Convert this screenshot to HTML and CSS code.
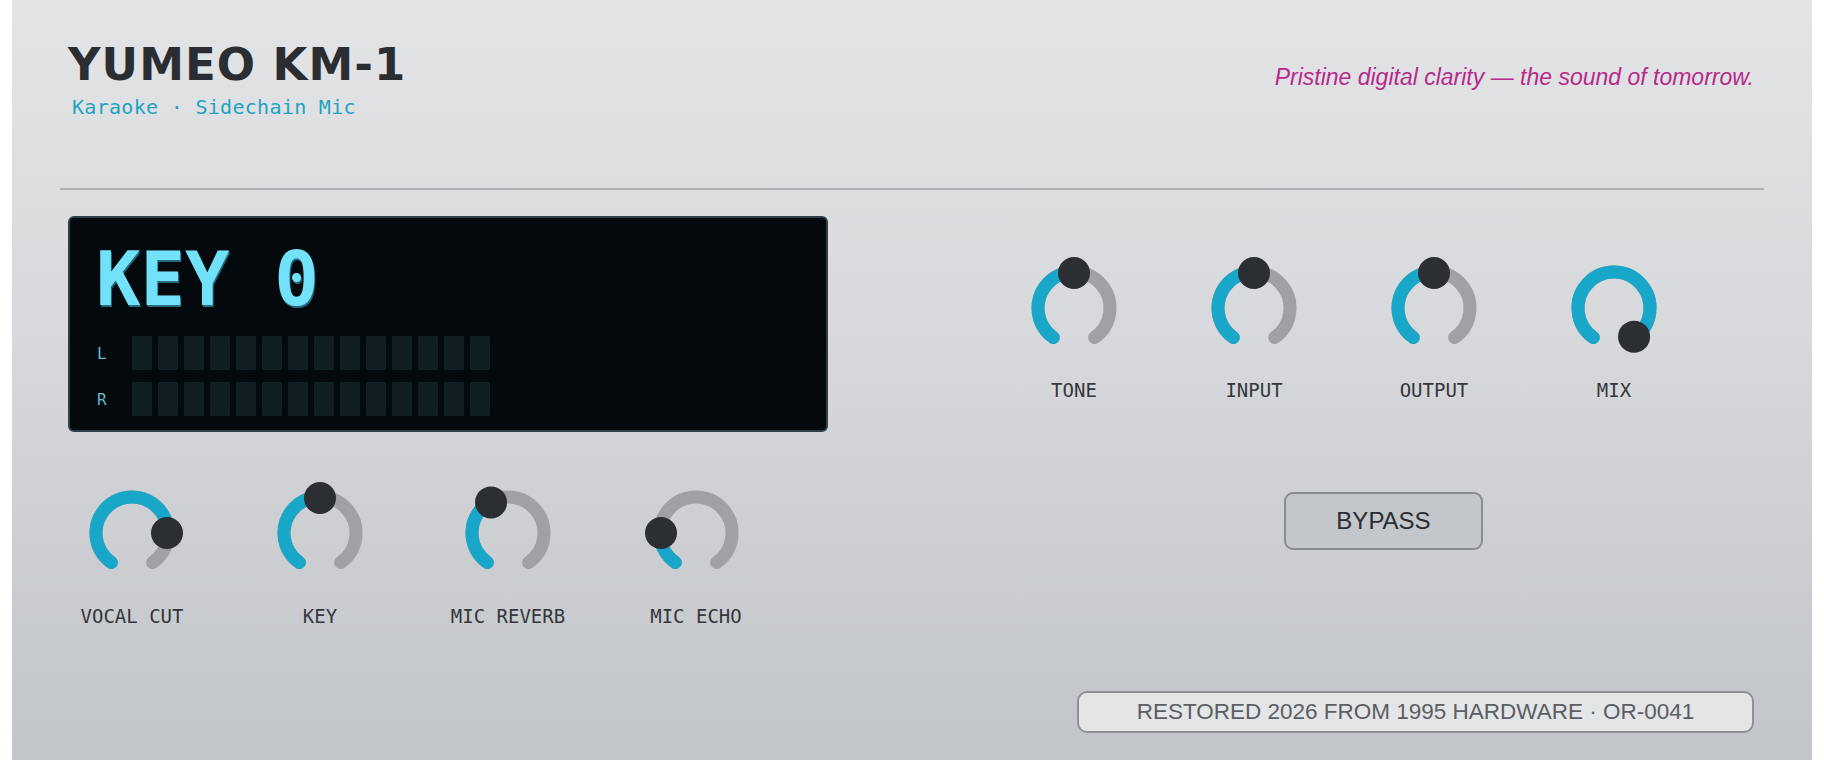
FILE: index.html
```html
<!DOCTYPE html>
<html lang="en">
<head>
  <meta charset="UTF-8">
  <title>YUMEO KM-1</title>
  <meta name="viewport" content="width=device-width, initial-scale=1.0">
  <link rel="stylesheet" href="styles.css">
</head>
<body>

<div class="panel">
  <header class="header">
    <div class="brand">
      <h1 class="title">YUMEO KM-1</h1>
      <div class="subtitle">Karaoke · Sidechain Mic</div>
    </div>
    <div class="tagline">Pristine digital clarity — the sound of tomorrow.</div>
  </header>

  <hr class="divider">

  <div class="main">
    <div class="left">
      <div class="display">
        <div class="readout">KEY 0</div>
        <div class="meter">
          <span class="ch">L</span>
          <div class="segs" data-count="14"></div>
        </div>
        <div class="meter">
          <span class="ch">R</span>
          <div class="segs" data-count="14"></div>
        </div>
      </div>

      <div class="knobs knobs-bottom">
        <div class="knob" data-value="0.81"><svg class="dial" viewBox="0 0 104 104"></svg><span class="knob-label">VOCAL CUT</span></div>
        <div class="knob" data-value="0.5"><svg class="dial" viewBox="0 0 104 104"></svg><span class="knob-label">KEY</span></div>
        <div class="knob" data-value="0.4"><svg class="dial" viewBox="0 0 104 104"></svg><span class="knob-label">MIC REVERB</span></div>
        <div class="knob" data-value="0.19"><svg class="dial" viewBox="0 0 104 104"></svg><span class="knob-label">MIC ECHO</span></div>
      </div>
    </div>

    <div class="right">
      <div class="knobs knobs-top">
        <div class="knob" data-value="0.5"><svg class="dial" viewBox="0 0 104 104"></svg><span class="knob-label">TONE</span></div>
        <div class="knob" data-value="0.5"><svg class="dial" viewBox="0 0 104 104"></svg><span class="knob-label">INPUT</span></div>
        <div class="knob" data-value="0.5"><svg class="dial" viewBox="0 0 104 104"></svg><span class="knob-label">OUTPUT</span></div>
        <div class="knob" data-value="1"><svg class="dial" viewBox="0 0 104 104"></svg><span class="knob-label">MIX</span></div>
      </div>
      <button class="bypass" type="button">BYPASS</button>
    </div>
  </div>

  <footer class="footer">
    <div class="badge">RESTORED 2026 FROM 1995 HARDWARE · OR-0041</div>
  </footer>
</div>

<script>
  // meter segments
  document.querySelectorAll('.segs').forEach(row => {
    const n = parseInt(row.dataset.count, 10);
    for (let i = 0; i < n; i++) {
      row.insertAdjacentHTML('beforeend', '<span class="seg"></span>');
    }
  });

  // knobs: 290 degree sweep, from -145 to +145 (0 = straight up)
  const START = -145;
  const END = 145;
  const C = 52;

  function polar(deg, r) {
    const a = deg * Math.PI / 180;
    return [C + r * Math.sin(a), C - r * Math.cos(a)];
  }

  function arc(from, to, r) {
    const [x1, y1] = polar(from, r);
    const [x2, y2] = polar(to, r);
    const large = (to - from) > 180 ? 1 : 0;
    return `M${x1.toFixed(2)} ${y1.toFixed(2)} A${r} ${r} 0 ${large} 1 ${x2.toFixed(2)} ${y2.toFixed(2)}`;
  }

  document.querySelectorAll('.knob').forEach(knob => {
    const v = parseFloat(knob.dataset.value);
    const ang = START + (END - START) * v;
    const [dx, dy] = polar(ang, 35);
    const svg = knob.querySelector('.dial');
    svg.innerHTML = `
      <path class="track" d="${arc(START, END, 36)}" />
      ${v > 0 ? `<path class="fill" d="${arc(START, ang, 36)}" />` : ''}
      <circle class="dot" cx="${dx.toFixed(2)}" cy="${dy.toFixed(2)}" r="16" />
    `;
  });
</script>

</body>
</html>
```

FILE: styles.css
```css
html, body {
  margin: 0;
  padding: 0;
  background: #fff;
}

.panel {
  margin-left: 12px;
  width: 1800px;
  min-height: 100vh;
  box-sizing: border-box;
  padding: 42px 48px 40px;
  background: linear-gradient(to bottom, #e3e4e6 0%, #d6d8db 45%, #c1c4c8 100%);
}

/* header */
.header {
  display: flex;
  justify-content: space-between;
  align-items: flex-start;
  padding: 0 10px 0 8px;
}

.title {
  margin: 0;
  font-family: "DejaVu Sans", sans-serif;
  font-weight: bold;
  font-size: 45px;
  line-height: 1;
  letter-spacing: 1px;
  color: #2a2d31;
}

.subtitle {
  margin-top: 8px;
  font-family: "DejaVu Sans Mono", monospace;
  font-size: 20px;
  line-height: 24px;
  letter-spacing: 0.3px;
  color: #1fa3c3;
  padding-left: 4px;
}

.tagline {
  margin-top: 22px;
  font-family: "Liberation Sans", sans-serif;
  font-style: italic;
  font-size: 23px;
  line-height: 26px;
  color: #b72a8b;
}

.divider {
  margin: 69px 0 0;
  border: 0;
  height: 2px;
  background: #afb1b4;
}

/* main */
.main {
  display: flex;
  align-items: flex-start;
  margin-top: 26px;
  padding-left: 8px;
}

.left {
  width: 760px;
}

.display {
  box-sizing: border-box;
  height: 216px;
  padding: 24px 26px 14px;
  background: #03090c;
  border: 2px solid #2e414b;
  border-radius: 6px;
}

.readout {
  font-family: "DejaVu Sans Mono", monospace;
  font-weight: bold;
  font-size: 74px;
  line-height: 1;
  white-space: pre;
  color: #72e2fa;
  text-shadow: 1px 2px 0 rgba(52, 140, 162, 0.75);
  margin-bottom: 20px;
}

.meter {
  display: flex;
  align-items: center;
  height: 34px;
  margin-bottom: 12px;
}

.meter:last-child {
  margin-bottom: 0;
}

.ch {
  width: 36px;
  padding-left: 1px;
  box-sizing: border-box;
  font-family: "DejaVu Sans Mono", monospace;
  font-size: 16px;
  color: #62b9cc;
}

.segs {
  display: flex;
  gap: 6px;
  height: 100%;
}

.seg {
  width: 20px;
  height: 100%;
  background: #111e24;
  border-radius: 1px;
}

/* knobs */
.knobs {
  display: grid;
  grid-template-columns: repeat(4, 120px);
}

.knobs-bottom {
  margin-top: 49px;
  margin-left: 4px;
  column-gap: 68px;
}

.knobs-top {
  column-gap: 60px;
}

.knob {
  display: flex;
  flex-direction: column;
  align-items: center;
}

.dial {
  width: 104px;
  height: 104px;
  overflow: visible;
}

.dial .track,
.dial .fill {
  fill: none;
  stroke-width: 13;
  stroke-linecap: round;
}

.dial .track {
  stroke: #a0a1a5;
}

.dial .fill {
  stroke: #19a7c9;
}

.dial .dot {
  fill: #2b2e33;
}

.knob-label {
  margin-top: 20px;
  font-family: "DejaVu Sans Mono", monospace;
  font-size: 19px;
  line-height: 22px;
  color: #34373c;
  white-space: nowrap;
}

.right {
  margin-left: 186px;
  padding-top: 40px;
}

.knobs-top .knob-label {
  margin-top: 19px;
}

.bypass {
  display: block;
  margin: 91px 0 0 270px;
  width: 199px;
  height: 58px;
  background: #c3c6ca;
  border: 2px solid #898c90;
  border-radius: 9px;
  font-family: "Liberation Sans", sans-serif;
  font-size: 24px;
  color: #2a2d31;
}

/* footer */
.footer {
  display: flex;
  justify-content: flex-end;
  margin-top: 64px;
  padding-right: 10px;
}

.badge {
  box-sizing: border-box;
  width: 677px;
  height: 42px;
  line-height: 38px;
  text-align: center;
  background: #e3e5e7;
  border: 2px solid #8e9195;
  border-radius: 10px;
  font-family: "Liberation Sans", sans-serif;
  font-size: 22.5px;
  color: #5b5e63;
}
```
